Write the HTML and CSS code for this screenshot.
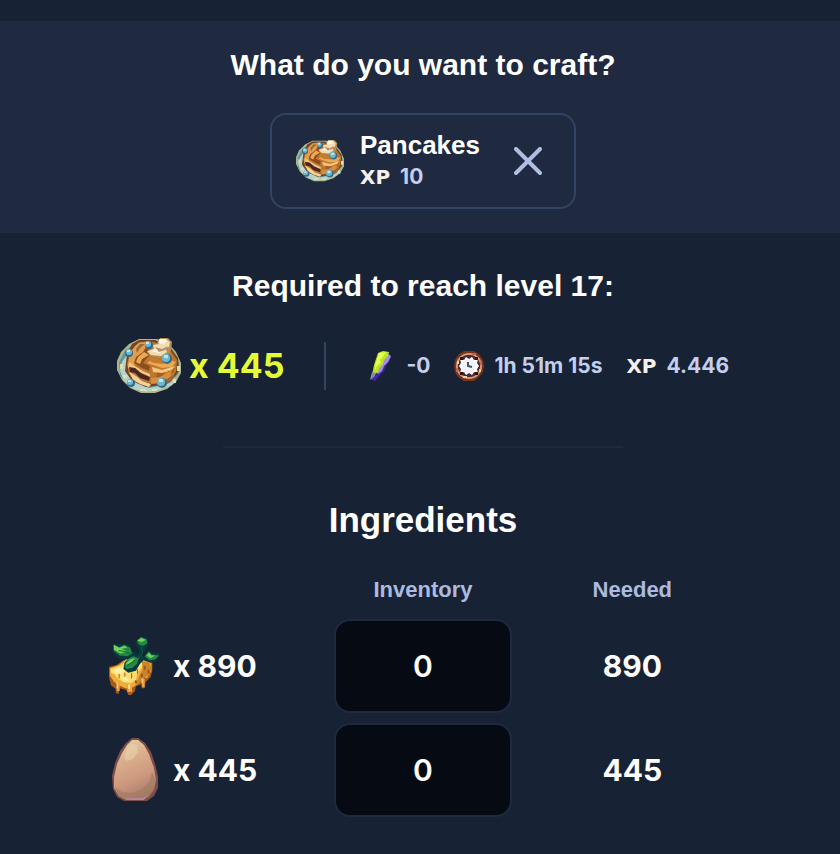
FILE: index.html
```
<!DOCTYPE html>
<html lang="en">
<head>
  <meta charset="utf-8">
  <meta name="viewport" content="width=device-width, initial-scale=1">
  <title>Crafting calculator</title>
  <link rel="stylesheet" href="styles.css">
</head>
<body>
  <!-- shared icons -->
  <svg class="sprite" aria-hidden="true">
    <symbol id="pancakes" viewBox="0 0 64 56">
      <path fill="#a9b78c" d="M22 1h18l11 4 8 9 5 11v10l-5 9-9 7-12 4H24l-11-5-8-8-5-10v-9l4-9 8-8z"/>
      <path fill="#5d959e" d="M21 3h19l13 8 9 14-1 11-8 9-14 7H25L12 48 3 37 2 24l6-11z"/>
      <path fill="#b5d3cb" d="M9 18l5-5-4 12 1 11 9 9 12 5 14-3 12-9-3 9-12 5-14 2-12-3-10-8-4-10 2-9z"/>
      <path fill="#744321" d="M22 2h16l15 7 8 11 1 13-7 9-11 5-15 2-14-6-7-10 2-17 5-10z"/>
      <path fill="#bd762e" d="M22 4h15l16 8 7 10-1 12-8 7-13 5-14-3-12-7-2-10 3-12z"/>
      <path fill="#df9d4d" d="M22 5l10-2-3 8-5 6-6 5-1 8-6-3 2-12 5-7z"/>
      <path fill="#8e4d1d" d="M29 9l7 6-6 5-4 5 7 3-1 5-7-3-8-5 2-6 7-5z"/>
      <path fill="#eba953" d="M27 14l5 3-7 4-2 5-4-2 2-5zM36 20l7 3 10-1 6 2-4 5-10 1-9-3-6-2z"/>
      <path fill="#c67b2c" d="M33 18l8 4 9 1-4 3-9-1-7-3zM39 30l12 1 8-2-2 8-8 5-10 2z"/>
      <path fill="#a65b21" d="M40 33l8 1-2 4-7 2zM51 32l7-2-2 5-5 1z"/>
      <path fill="#f2c682" d="M12 24l6 4 8 5 7 3v4l-9-3-7-5-6-2zM35 29l10 3 13-4-3 4-10 3-9-1z"/>
      <path fill="#4c2523" d="M12 29l6 1 6 5 9 4-1 4-9-3-5-5-5-1z"/>
      <path fill="#f5d19a" d="M12 34l7 4 6 5 9 3-2 3-9-3-7-4z"/>
      <path fill="#d78d3e" d="M34 40l9-1 12-7-2 7-9 5-10 2z"/>
      <path fill="#9b6839" d="M48 43l10-7-4 8-8 4zM19 11l4-5h5l-5 4-3 5z"/>
      <path fill="#b98c52" d="M35 11l5-6 3-5h8l4 4-1 8-2 4-9 4-10-2-3-4z"/>
      <path fill="#f0ddb3" d="M42 1h7l4 3-1 5-4 1 2 4-6 4-10-1-4-4 7-2-1-4 6-1z"/>
      <path fill="#fff8e2" d="M43 1h6l1 3-5 2-4-1zM34 13l7-3 5 2-4 3z"/>
      <path fill="#bc8b6b" d="M38 9l7 2 6-3-3 4-6 2z"/>
      <g fill="#376b85"><circle cx="32" cy="7" r="4"/><circle cx="50" cy="21" r="5"/><circle cx="12" cy="15" r="4"/><circle cx="14" cy="45" r="4"/><circle cx="45" cy="45" r="5"/></g>
      <g fill="#70b8ce"><circle cx="31" cy="6" r="3"/><circle cx="49" cy="20" r="4"/><circle cx="12" cy="14" r="3"/><circle cx="13" cy="44" r="3"/><circle cx="44" cy="44" r="4"/></g>
      <path fill="#bfe6e5" d="M29 4h3v2h-3zM47 17h4v3h-4zM10 12h3v2h-3zM11 42h3v2h-3zM42 41h4v3h-4z"/>
      <path fill="#dfdfb4" d="M3 26h3v5H3zM6 37h4v3H6zM23 51h6v2h-6zM35 51h5v2h-5zM56 41h3v4h-3zM60 28h3v5h-3z"/>
    </symbol>
    <symbol id="energy" viewBox="0 0 30 30">
      <path fill="#4425a5" d="M22 3l3 3-2 5-3 4-2 5-4 4-5 6-5-2 4-7 6-8z"/>
      <path fill="#a590dc" d="M21 2l4 3-3 6-4 4-2 5-4 3-3-4 6-9z"/>
      <path fill="#b9e51f" d="M12 2l5-2 6 1-1 4-4 4-1 4-3 3-2 5-6 4 1-6 1-5 2-6z"/>
      <path fill="#e5ff54" d="M13 2l7-1-4 6-2 2 1 3-4 3-2 4v-4l2-7z"/>
      <path fill="#8192a3" d="M6 21l4 1-2 4-4 3z"/>
    </symbol>
    <symbol id="clock" viewBox="0 0 30 30">
      <path fill="#7b3516" d="M10 0h10l5 3 4 6 1 6-1 6-4 5-5 4H10l-6-4-3-5-1-6 1-6 4-6z"/>
      <circle cx="15" cy="15" r="12" fill="none" stroke="#d09a80" stroke-width="2"/>
      <circle cx="15" cy="15" r="11" fill="#4a2932"/>
      <path fill="#fff" d="M12 6l3 2 3-2 2 3 4-1-1 4 2 3-2 3 1 4-4-1-2 3-3-2-3 2-2-3-4 1 1-4-2-3 2-3-1-4 4 1z"/>
      <circle cx="15" cy="15" r="7" fill="#f4f0fc"/>
      <path fill="none" stroke="#405650" stroke-width="2" d="M14 11v4l4 1"/>
      <path fill="#2b1015" d="M6 6h3v3H6zM21 6h3v3h-3zM6 21h3v3H6zM21 21h3v3h-3z"/>
      <path fill="#edd2a6" d="M3 10h2v3H3zM25 18h2v3h-2zM9 25h4v2H9z"/>
      <path fill="#c96351" d="M18 2h4v2h-4zM2 17h2v4H2zM26 10h2v4h-2z"/>
    </symbol>
    <symbol id="grain" viewBox="0 0 54 60">
      <path fill="#a55a1b" d="M0 31l8-2 7-5 10-3h16l4 5v9l-2 7-5 5-1 6h-3v-4l-6 2-1 5-4 4h-3l-2-5-7-2-1 6-3-1v-4l-5-4-2-9z"/>
      <path fill="#edae38" d="M1 32l9-3 8-6 9-2h13l4 6v8l-4 7-6 3-6 5-5 3h-6l-7-3-5-4-4-6z"/>
      <path fill="#ffdd70" d="M2 33l9-3 8-6 8-2 9 2-1 7-5 5-2 8-5 4-8-1-6-4-4-5-3-1z"/>
      <path fill="#fff0a0" d="M5 34l7-3 5 1-1 4-5 3-5-1zM19 31l5-3 4 2-3 5-5 1zM12 41l6 1 3 3-5 1z"/>
      <path fill="#ca8429" d="M34 25l8 1 2 6-2 7-5 3-5 6-5 1 3-5 2-5 3-5z"/>
      <path fill="#9a541d" d="M36 30h2v4h-2zM40 34h2v4h-2zM33 38h2v4h-2zM36 42h2v3h-2zM27 45h2v3h-2zM10 38h1v5h-1zM16 37h1v4h-1zM23 37h1v6h-1zM29 33h1v5h-1z"/>
      <path fill="#eda044" d="M8 47h3v9H8zM19 49h5v8h-5zM34 43h3v9h-3z"/>
      <path fill="#ffe28d" d="M8 47h1v6H8zM20 49h2v5h-2zM34 43h1v5h-1z"/>
      <path fill="#063b3c" d="M4 7l4 1 5-1 8 1 4 7 5 3 2-4-4-5v-5l5-4 6 2 2 6-3 5-4 4 1 4 5-2 1-6 4 3 8 1-4 8-5 2-8-3-4 4-4 7-8 2-5-4 1-6 4-5-9 1-7-7z"/>
      <path fill="#278747" d="M5 8l5 3 6-3 6 3 2 6-5 3-8-1-6-5zM29 4l4-4 6 2 1 4-4 3-5-1zM37 20l4-5 3 3 8 1-4 4-6 1zM16 30l3-7 6-3 6 2-2 6-5 4-6 1z"/>
      <path fill="#70d456" d="M5 8l6 3 5-2 3 2-6 1 6 3-7 2-7-4zM30 3l4-2 4 2-4 2-4-1zM39 19l3-3 2 3 4 0-5 3zM18 27l4-4 5-1-3 4-6 3z"/>
      <path fill="none" stroke="#0a6142" stroke-width="1" d="M10 14l7 1 6 3M33 8l2 9-5 5M18 30l9-6"/>
    </symbol>
    <symbol id="egg" viewBox="0 0 46 64">
      <linearGradient id="shell" x1="0.3" y1="0" x2="0.6" y2="1">
        <stop offset="0" stop-color="#e4cda2"/>
        <stop offset="0.35" stop-color="#d8ab8b"/>
        <stop offset="0.65" stop-color="#cd987e"/>
        <stop offset="1" stop-color="#a77a66"/>
      </linearGradient>
      <path fill="#7c4e4a" d="M20 0h6l7 5 6 9 4 12 3 12v12l-4 8-7 5H12l-7-4-4-8-1-13 3-13 5-12 6-8z"/>
      <path fill="url(#shell)" d="M20 2h6l6 5 5 9 5 14 2 12-2 9-5 7-7 4H14l-7-4-5-8V39l3-13 5-11 5-8z"/>
      <path fill="#ecd7b0" opacity="0.5" d="M19 6l6 1 1 7-5 7-6 2-3-4 3-8z"/>
      <path fill="#9f7c60" opacity="0.6" d="M3 49l7 5 10 1 10-4 7-7 3-10 4 9-2 9-5 7-7 3H15l-8-5z"/>
      <path fill="#b98596" d="M14 60h17l5-3-4 5H15z"/>
    </symbol>
  </svg>

  <section class="craft">
    <h2>What do you want to craft?</h2>
    <div class="card">
      <svg class="card-icon"><use href="#pancakes"/></svg>
      <div class="card-info">
        <div class="card-name">Pancakes</div>
        <div class="stat"><span class="xp">XP</span> <span>10</span></div>
      </div>
      <button class="close" type="button" aria-label="Remove Pancakes">
        <svg viewBox="0 0 28 28"><path d="M2 2l24 24M26 2L2 26"/></svg>
      </button>
    </div>
  </section>

  <main>
    <h2>Required to reach level 17:</h2>
    <div class="required">
      <div class="total">
        <svg class="total-icon"><use href="#pancakes"/></svg>
        <span>x 445</span>
      </div>
      <div class="stats">
        <div class="stat"><svg class="stat-icon"><use href="#energy"/></svg><span>-0</span></div>
        <div class="stat"><svg class="stat-icon"><use href="#clock"/></svg><span>1h 51m 15s</span></div>
        <div class="stat"><span class="xp">XP</span><span>4.446</span></div>
      </div>
    </div>

    <hr>

    <h3 id="ingredients">Ingredients</h3>
    <table aria-labelledby="ingredients">
      <thead>
        <tr>
          <td></td>
          <th scope="col">Inventory</th>
          <th scope="col">Needed</th>
        </tr>
      </thead>
      <tbody>
        <tr>
          <td>
            <label class="item" for="grain-inventory">
              <svg class="item-icon"><use href="#grain"/></svg>
              <span>x 890</span>
            </label>
          </td>
          <td><input type="text" inputmode="numeric" id="grain-inventory" value="0"></td>
          <td>890</td>
        </tr>
        <tr>
          <td>
            <label class="item" for="egg-inventory">
              <svg class="item-icon"><use href="#egg"/></svg>
              <span>x 445</span>
            </label>
          </td>
          <td><input type="text" inputmode="numeric" id="egg-inventory" value="0"></td>
          <td>445</td>
        </tr>
      </tbody>
    </table>
  </main>
</body>
</html>
```

FILE: styles.css
```
* {
  box-sizing: border-box;
}

body {
  margin: 0;
  padding-top: 21px;
  background-color: #182235;
  color: #fff;
  font-family: "Liberation Sans", Arial, sans-serif;
  font-weight: bold;
}

.sprite {
  position: absolute;
  width: 0;
  height: 0;
}

h2, h3 {
  margin: 0;
  line-height: 40px;
  text-align: center;
}

h2 {
  font-size: 30px;
}

h3 {
  font-size: 35px;
}

.craft, main {
  display: flex;
  flex-direction: column;
  align-items: center;
  padding: 24px 12px 24px 18px;
}

.craft {
  gap: 28px;
  background-color: #1f2940;
}

.card {
  display: flex;
  align-items: center;
  gap: 16px;
  padding: 14px 30px 14px 24px;
  border: 2px solid #334362;
  border-radius: 16px;
}

.card-icon {
  width: 48px;
  height: 44px;
}

.card-name {
  font-size: 26px;
  line-height: 32px;
}

.close {
  width: 32px;
  height: 32px;
  margin-left: 16px;
  padding: 2px;
  border: none;
  background: none;
  cursor: pointer;
}

.close svg {
  display: block;
  width: 28px;
  height: 28px;
  fill: none;
  stroke: #b0bee3;
  stroke-width: 4;
  stroke-linecap: round;
}

.stat {
  display: flex;
  align-items: center;
  gap: 10px;
  color: #c3cfed;
  font-family: Inter, "Liberation Sans", sans-serif;
  font-size: 21px;
  line-height: 32px;
}

.stat-icon {
  width: 30px;
  height: 30px;
}

.xp {
  color: #f4f0ec;
  font-family: "DejaVu Sans", sans-serif;
  font-size: 20px;
}

main {
  padding-top: 33px;
}

.required {
  display: flex;
  align-items: center;
  gap: 40px;
  margin-top: 32px;
}

.total {
  display: flex;
  align-items: center;
  gap: 8px;
  color: #e3fc35;
  font-family: Inter, "Liberation Sans", sans-serif;
  font-size: 34px;
  line-height: 40px;
}

.total-icon {
  width: 64px;
  height: 56px;
}

.stats {
  display: flex;
  align-items: center;
  gap: 24px;
  min-height: 48px;
  padding-left: 40px;
  border-left: 2px solid #334362;
}

hr {
  width: 100%;
  max-width: 400px;
  margin: 52px 0;
  border: none;
  border-top: 2px solid #1f2940;
}

table {
  width: 100%;
  max-width: 628px;
  margin-top: 26px;
  border-collapse: collapse;
  table-layout: fixed;
  font-family: Inter, "Liberation Sans", sans-serif;
  font-size: 30px;
  text-align: center;
}

th {
  height: 48px;
  padding: 0;
  color: #adbadf;
  font-family: "Liberation Sans", Arial, sans-serif;
  font-size: 22px;
}

tbody td {
  height: 104px;
  padding: 0;
}

.item {
  display: flex;
  align-items: center;
  gap: 12px;
}

.item-icon {
  width: 52px;
  height: 64px;
}

input {
  display: block;
  width: 178px;
  max-width: 100%;
  height: 94px;
  margin: 0 auto;
  border: 2px solid #1f2940;
  border-radius: 16px;
  background-color: #060a12;
  color: #fff;
  font-family: inherit;
  font-size: 30px;
  font-weight: 600;
  text-align: center;
}
```
